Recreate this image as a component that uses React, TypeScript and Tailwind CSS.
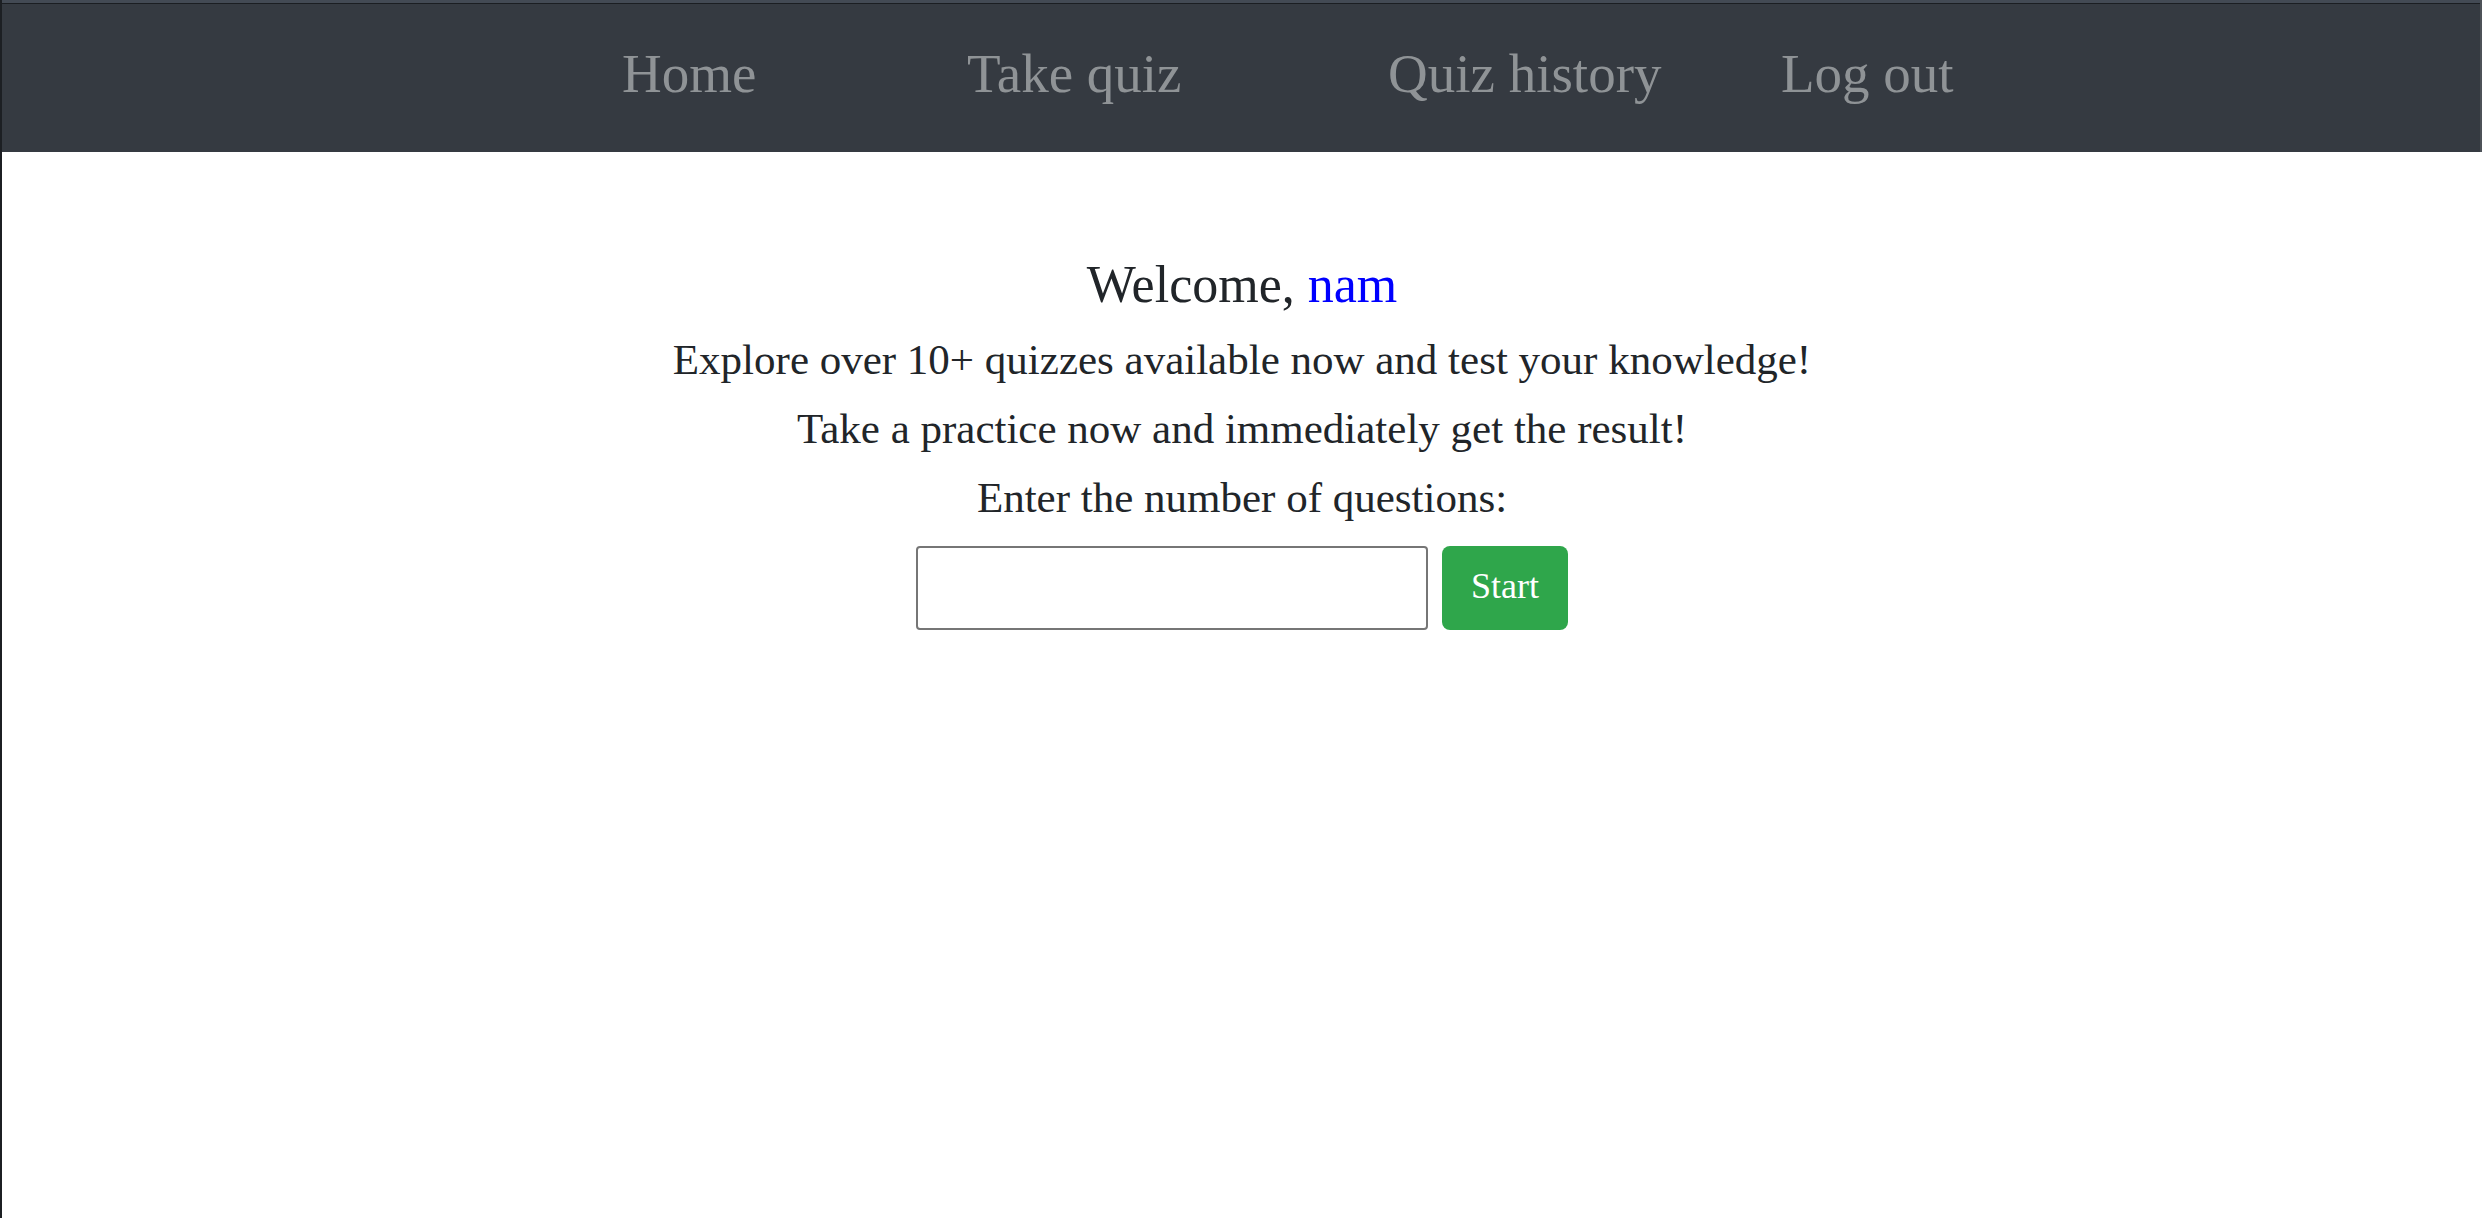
import React from "react";

const serif = { fontFamily: '"Liberation Serif", "Times New Roman", serif' };

export default function App() {
  const links = [
    { label: "Home", w: "w-[345px]" },
    { label: "Take quiz", w: "w-[421px]" },
    { label: "Quiz history", w: "w-[393px]" },
    { label: "Log out", w: "w-auto" },
  ];
  return (
    <div
      className="min-h-[1218px] bg-white border-l-2 border-[#1c1f23] text-[#212529]"
      style={serif}
    >
      <header className="h-[152px] flex flex-col bg-[#353a41] border-r-2 border-[#4d5258]">
        <div className="h-[3px] bg-[#434a54]" />
        <div className="h-px bg-[#1b1e22]" />
        <nav className="flex-1 flex items-center pl-[620px] pb-[7px]">
          {links.map((l) => (
            <div key={l.label} className={`${l.w} shrink-0`}>
              <a href="#" className="text-[55px] text-[#8f9396] whitespace-nowrap">
                {l.label}
              </a>
            </div>
          ))}
        </nav>
      </header>

      <main className="flex flex-col items-center pt-[102px]">
        <h3 className="text-[52px] leading-[62px] mb-[9px]">
          Welcome, <span className="text-[#0000ff]">nam</span>
        </h3>
        <p className="text-[43px] leading-[69px]">
          Explore over 10+ quizzes available now and test your knowledge!
        </p>
        <p className="text-[43px] leading-[69px]">
          Take a practice now and immediately get the result!
        </p>
        <p className="text-[43px] leading-[69px]">Enter the number of questions:</p>
        <div className="flex items-center gap-[14px] mt-[14px]">
          <input
            type="text"
            className="w-[512px] h-[84px] border-2 border-[#767676] rounded-[4px] bg-white outline-none px-3 text-[36px]"
            style={serif}
          />
          <button
            className="w-[126px] h-[84px] rounded-[8px] bg-[#2fa64b] text-white text-[36px] pb-[4px]"
            style={serif}
          >
            Start
          </button>
        </div>
      </main>
    </div>
  );
}
